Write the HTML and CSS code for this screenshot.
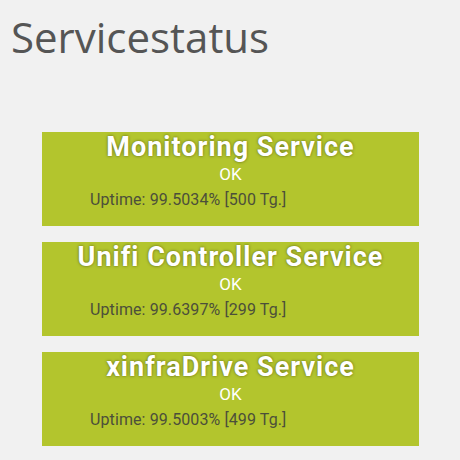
FILE: index.html
```html
<!DOCTYPE html>
<html>
<head>
<meta charset="utf-8">
<link rel="stylesheet" href="styles.css">
</head>
<body>
<h1 class="title">Servicestatus</h1>
<div class="list">
  <div class="card">
    <div class="name">Monitoring Service</div>
    <div class="state">OK</div>
    <div class="uptime">Uptime: 99.5034% [500 Tg.]</div>
  </div>
  <div class="card">
    <div class="name">Unifi Controller Service</div>
    <div class="state">OK</div>
    <div class="uptime">Uptime: 99.6397% [299 Tg.]</div>
  </div>
  <div class="card">
    <div class="name">xinfraDrive Service</div>
    <div class="state">OK</div>
    <div class="uptime">Uptime: 99.5003% [499 Tg.]</div>
  </div>
</div>
</body>
</html>
```
FILE: styles.css
```css
html, body {
  margin: 0;
  padding: 0;
  background: #f1f1f1;
}
body {
  width: 460px;
  height: 460px;
  overflow: hidden;
}
.title {
  margin: 0;
  padding: 8px 0 0 11px;
  font-family: "Open Sans", sans-serif;
  font-weight: 400;
  font-size: 42px;
  line-height: 57px;
  color: #555555;
}
.list {
  display: flex;
  flex-direction: column;
  gap: 16px;
  margin: 67px 0 0 42px;
  width: 377px;
}
.card {
  background: #b3c52d;
  height: 94px;
  font-family: Roboto, sans-serif;
}
.name {
  text-align: center;
  font-size: 27px;
  font-weight: 700;
  letter-spacing: 1px;
  line-height: 30px;
  color: #ffffff;
  text-shadow: 0 0 3px rgba(0,0,0,0.5);
}
.state {
  text-align: center;
  font-size: 17px;
  line-height: 24px;
  color: #ffffff;
}
.uptime {
  padding: 2px 0 0 48px;
  font-size: 16px;
  letter-spacing: 0.1px;
  line-height: 23px;
  color: #4c4f3a;
}
```
